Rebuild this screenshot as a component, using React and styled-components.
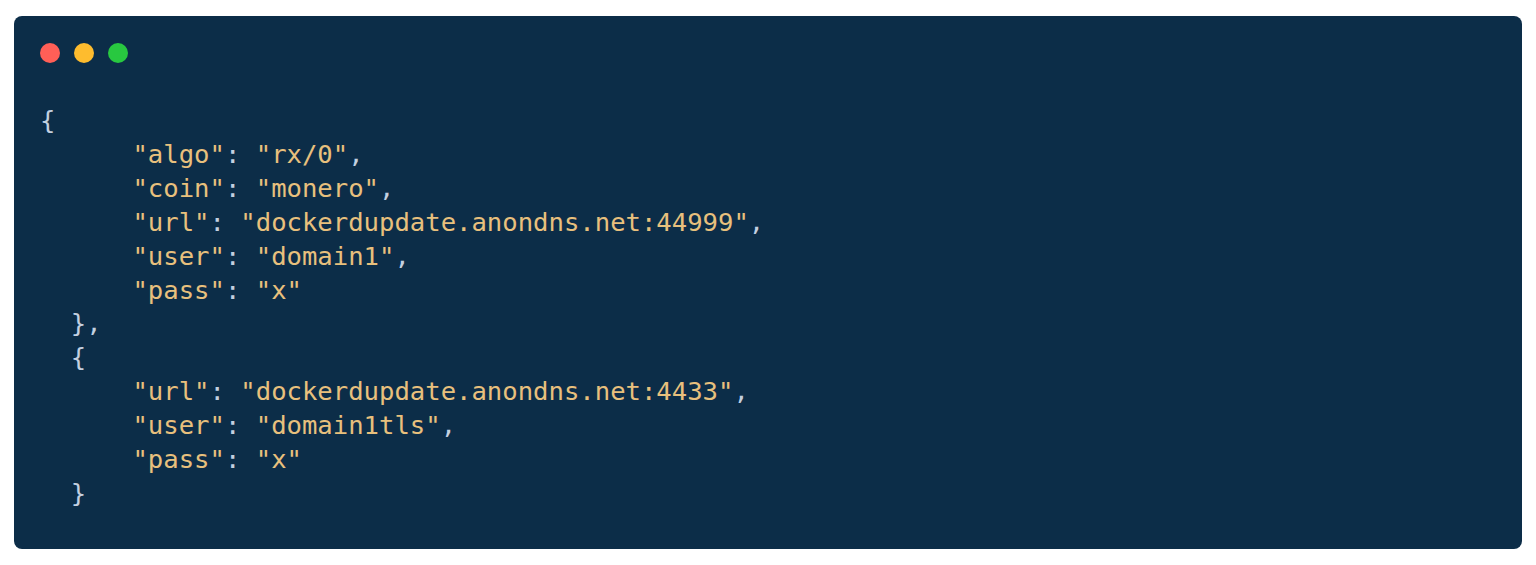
import React from 'react';
import styled, { createGlobalStyle } from 'styled-components';

const GlobalStyle = createGlobalStyle`
  html, body {
    margin: 0;
    padding: 0;
    background: #ffffff;
  }
`;

const Page = styled.div`
  padding: 16px 14px 17px 14px;
  box-sizing: border-box;
`;

const Window = styled.div`
  background: #0c2d48;
  border-radius: 8px;
  padding: 27px 26px 38px 26px;
  display: flex;
  flex-direction: column;
  gap: 41px;
`;

const Dots = styled.div`
  display: flex;
  gap: 14px;
`;

const Dot = styled.span`
  width: 20px;
  height: 20px;
  border-radius: 50%;
  background: ${(props) => props.color};
`;

const Code = styled.pre`
  margin: 0;
  font-family: 'DejaVu Sans Mono', 'Liberation Mono', monospace;
  font-size: 25.6px;
  line-height: 33.9px;
  color: #c3d0e0;
  white-space: pre;
`;

const Str = styled.span`
  color: #e8c07d;
`;

const lines = [
  [['p', '{']],
  [['p', '      '], ['s', '"algo"'], ['p', ': '], ['s', '"rx/0"'], ['p', ',']],
  [['p', '      '], ['s', '"coin"'], ['p', ': '], ['s', '"monero"'], ['p', ',']],
  [['p', '      '], ['s', '"url"'], ['p', ': '], ['s', '"dockerdupdate.anondns.net:44999"'], ['p', ',']],
  [['p', '      '], ['s', '"user"'], ['p', ': '], ['s', '"domain1"'], ['p', ',']],
  [['p', '      '], ['s', '"pass"'], ['p', ': '], ['s', '"x"']],
  [['p', '  },']],
  [['p', '  {']],
  [['p', '      '], ['s', '"url"'], ['p', ': '], ['s', '"dockerdupdate.anondns.net:4433"'], ['p', ',']],
  [['p', '      '], ['s', '"user"'], ['p', ': '], ['s', '"domain1tls"'], ['p', ',']],
  [['p', '      '], ['s', '"pass"'], ['p', ': '], ['s', '"x"']],
  [['p', '  }']],
];

const App = () => {
  return (
    <Page>
      <GlobalStyle />
      <Window>
        <Dots>
          <Dot color="#ff5f57" />
          <Dot color="#febc2e" />
          <Dot color="#28c840" />
        </Dots>
        <Code>
          {lines.map((line, i) => (
            <React.Fragment key={i}>
              {line.map(([kind, text], j) =>
                kind === 's' ? <Str key={j}>{text}</Str> : <span key={j}>{text}</span>
              )}
              {i < lines.length - 1 ? '\n' : ''}
            </React.Fragment>
          ))}
        </Code>
      </Window>
    </Page>
  );
};

export default App;
